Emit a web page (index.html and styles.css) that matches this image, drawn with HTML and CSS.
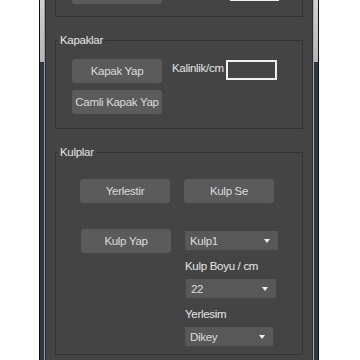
FILE: index.html
```html
<!DOCTYPE html>
<html lang="tr">
<head>
    <meta charset="UTF-8">
    <meta name="viewport" content="width=device-width, initial-scale=1.0">
    <title>Dolap</title>
    <link rel="stylesheet" href="styles.css">
</head>
<body>
    <div class="window">
        <div class="edge edge-left"></div>
        <div class="panel">
            <fieldset class="group group-top">
                <div class="top-row">
                    <button class="btn"></button>
                    <span class="field field-top"></span>
                </div>
            </fieldset>

            <fieldset class="group group-covers">
                <legend>Kapaklar</legend>
                <div class="cover-grid">
                    <button class="btn">Kapak Yap</button>
                    <span class="label">Kalinlik/cm</span>
                    <input class="field" type="text">
                    <button class="btn">Camli Kapak Yap</button>
                </div>
            </fieldset>

            <fieldset class="group group-handles">
                <legend>Kulplar</legend>
                <div class="handle-grid">
                    <button class="btn">Yerlestir</button>
                    <button class="btn">Kulp Se</button>
                    <button class="btn btn-shift">Kulp Yap</button>
                    <div class="handle-stack">
                        <div class="combo combo-wide">Kulp1</div>
                        <span class="label stack-label">Kulp Boyu / cm</span>
                        <div class="combo combo-mid">22</div>
                        <span class="label stack-label">Yerlesim</span>
                        <div class="combo combo-short">Dikey</div>
                    </div>
                </div>
            </fieldset>
        </div>
        <div class="edge edge-right"></div>
    </div>
</body>
</html>
```

FILE: styles.css
```css
body {
    margin: 0;
    background-color: white;
    font-family: "Liberation Sans", Arial, sans-serif;
    font-size: 11.5px;
    letter-spacing: -0.3px;
}

.window {
    display: flex;
    width: 278px;
    height: 360px;
    margin-left: 39px;
    border-left: 1px solid #111;
    border-right: 1px solid #111;
    overflow: hidden;
}

.edge {
    width: 4px;
    background: linear-gradient(#d2d2d2, #b4b4b4 62px, #2d3743 62px, #2d3743);
}

.edge-left {
    border-right: 1px solid #8e9aa5;
}

.edge-right {
    border-left: 1px solid #aab3bb;
}

.panel {
    flex: 1;
    padding: 0 9px;
    background-color: #444444;
    border-left: 1px solid #2c2c2c;
    border-right: 1px solid #2c2c2c;
    overflow: hidden;
}

.group {
    margin: 16px 0 0;
    padding: 12px 0 14px 0;
    min-width: 0;
    border: 1px solid #333333;
    color: #e6e6e6;
}

.group legend {
    margin-left: 2px;
    padding: 0 2px;
    line-height: 14px;
}

.group-top {
    margin-top: -31px;
    padding: 10px 0 12px 16px;
}

.top-row {
    display: flex;
    align-items: flex-start;
}

.btn {
    width: 90px;
    height: 24px;
    padding: 0;
    border: none;
    border-radius: 3px;
    background-color: #5b5b5b;
    color: #dcdcdc;
    font-family: inherit;
    font-size: inherit;
    letter-spacing: inherit;
}

.field {
    width: 51px;
    height: 20px;
    box-sizing: border-box;
    border: 2px solid #f0f0f0;
    background-color: transparent;
}

.field-top {
    width: 49px;
    margin: 1px 0 0 68px;
}

.label {
    color: #e6e6e6;
    line-height: 14px;
    white-space: nowrap;
}

.cover-grid {
    display: grid;
    grid-template-columns: 90px 64px 1fr;
    row-gap: 7px;
    align-items: start;
    padding-left: 16px;
}

.cover-grid .label {
    margin: 2px 0 0 10px;
}

.cover-grid .field {
    margin-top: 1px;
}

.group-handles {
    padding: 20px 0 8px 0;
}

.handle-grid {
    display: grid;
    grid-template-columns: 90px 94px;
    column-gap: 14px;
    row-gap: 26px;
    align-items: start;
    padding-left: 24px;
}

.btn-shift {
    margin-left: 1px;
}

.handle-stack {
    display: flex;
    flex-direction: column;
    align-items: flex-start;
    margin: 2px 0 0 1px;
}

.stack-label {
    margin: 9px 0 6px;
}

.combo {
    display: flex;
    justify-content: space-between;
    align-items: center;
    height: 19px;
    box-sizing: border-box;
    padding: 0 8px 0 5px;
    background-color: #585858;
    color: #dcdcdc;
}

.combo::after {
    content: "";
    border-left: 3px solid transparent;
    border-right: 3px solid transparent;
    border-top: 4px solid #eeeeee;
}

.combo-wide {
    width: 93px;
}

.combo-mid {
    width: 90px;
    margin-left: 1px;
}

.combo-short {
    width: 88px;
}
```
